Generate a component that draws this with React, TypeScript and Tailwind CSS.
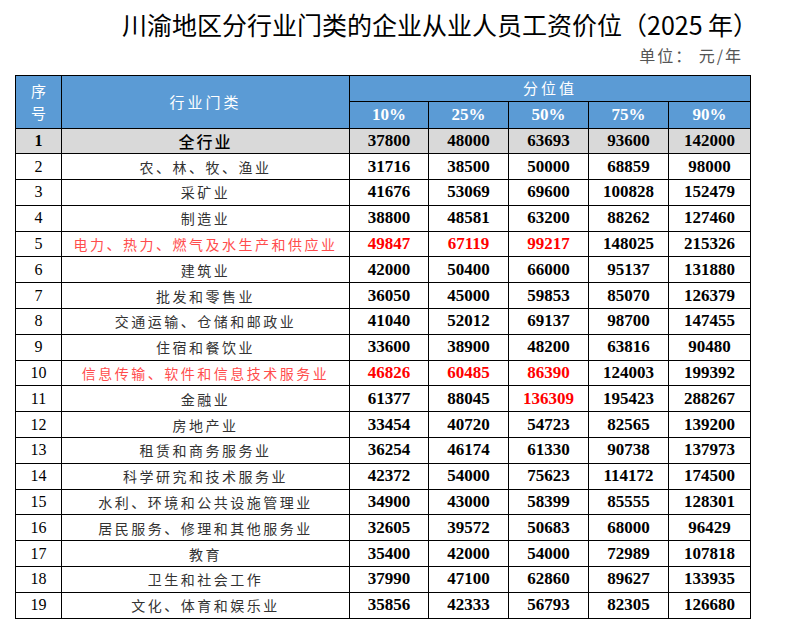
type Row = {
  no: number
  name: string
  values: number[]
  red?: number[]
  redName?: boolean
  total?: boolean
}

const rows: Row[] = [
  { no: 1, name: '全行业', values: [37800, 48000, 63693, 93600, 142000], total: true },
  { no: 2, name: '农、林、牧、渔业', values: [31716, 38500, 50000, 68859, 98000] },
  { no: 3, name: '采矿业', values: [41676, 53069, 69600, 100828, 152479] },
  { no: 4, name: '制造业', values: [38800, 48581, 63200, 88262, 127460] },
  { no: 5, name: '电力、热力、燃气及水生产和供应业', values: [49847, 67119, 99217, 148025, 215326], red: [0, 1, 2], redName: true },
  { no: 6, name: '建筑业', values: [42000, 50400, 66000, 95137, 131880] },
  { no: 7, name: '批发和零售业', values: [36050, 45000, 59853, 85070, 126379] },
  { no: 8, name: '交通运输、仓储和邮政业', values: [41040, 52012, 69137, 98700, 147455] },
  { no: 9, name: '住宿和餐饮业', values: [33600, 38900, 48200, 63816, 90480] },
  { no: 10, name: '信息传输、软件和信息技术服务业', values: [46826, 60485, 86390, 124003, 199392], red: [0, 1, 2], redName: true },
  { no: 11, name: '金融业', values: [61377, 88045, 136309, 195423, 288267], red: [2] },
  { no: 12, name: '房地产业', values: [33454, 40720, 54723, 82565, 139200] },
  { no: 13, name: '租赁和商务服务业', values: [36254, 46174, 61330, 90738, 137973] },
  { no: 14, name: '科学研究和技术服务业', values: [42372, 54000, 75623, 114172, 174500] },
  { no: 15, name: '水利、环境和公共设施管理业', values: [34900, 43000, 58399, 85555, 128301] },
  { no: 16, name: '居民服务、修理和其他服务业', values: [32605, 39572, 50683, 68000, 96429] },
  { no: 17, name: '教育', values: [35400, 42000, 54000, 72989, 107818] },
  { no: 18, name: '卫生和社会工作', values: [37990, 47100, 62860, 89627, 133935] },
  { no: 19, name: '文化、体育和娱乐业', values: [35856, 42333, 56793, 82305, 126680] },
]

const percents = ['10%', '25%', '50%', '75%', '90%']

export default function App() {
  return (
    <div className="w-[798px] h-[640px] bg-white overflow-hidden font-['Liberation_Serif','Noto_Sans_CJK_SC',serif]">
      <div className="pt-[8px] pl-[122px] h-[44px] text-[25px] leading-[32px] text-black font-['Noto_Sans_CJK_SC',sans-serif]">
        川渝地区分行业门类的企业从业人员工资价位（2025 年）
      </div>
      <div className="h-[31px] pr-[55px] text-right text-[16px] leading-[22px] tracking-[2px] text-[#555] font-['Noto_Sans_CJK_SC',sans-serif]">
        单位：&nbsp;元/年
      </div>

      <table className="ml-[15px] w-[736px] table-fixed border-collapse">
        <colgroup>
          <col className="w-[46px]" />
          <col className="w-[288px]" />
          <col className="w-[79px]" />
          <col className="w-[80px]" />
          <col className="w-[80px]" />
          <col className="w-[80px]" />
          <col className="w-[82px]" />
        </colgroup>
        <thead>
          <tr className="h-[26px] bg-[#5b9bd5] text-white">
            <th
              rowSpan={2}
              className="border border-black text-[15px] leading-[22px] font-normal font-['Noto_Sans_CJK_SC',serif]"
            >
              序<br />号
            </th>
            <th
              rowSpan={2}
              className="border border-black text-[15px] tracking-[3px] font-normal font-['Noto_Sans_CJK_SC',serif]"
            >
              行业门类
            </th>
            <th
              colSpan={5}
              className="border border-black text-[15px] tracking-[3px] font-normal font-['Noto_Sans_CJK_SC',serif]"
            >
              分位值
            </th>
          </tr>
          <tr className="h-[26px] bg-[#5b9bd5] text-white">
            {percents.map((p) => (
              <th key={p} className="border border-black text-[17px] font-bold">
                {p}
              </th>
            ))}
          </tr>
        </thead>
        <tbody>
          {rows.map((r) => (
            <tr key={r.no} className={`h-[25.8px] ${r.total ? 'bg-[#d9d9d9]' : 'bg-white'}`}>
              <td className={`border border-black p-0 text-center text-[16px] leading-[20px] text-black ${r.total ? 'font-bold' : ''}`}>
                {r.no}
              </td>
              <td
                className={`border border-black p-0 text-center leading-[20px] font-['Noto_Sans_CJK_SC',sans-serif] ${
                  r.total
                    ? 'text-[16px] tracking-[2px] text-black font-medium'
                    : r.redName
                      ? 'text-[14px] tracking-[2.5px] text-[#ff4d4d]'
                      : 'text-[14px] tracking-[2.5px] text-[#333]'
                }`}
              >
                {r.name}
              </td>
              {r.values.map((v, i) => (
                <td
                  key={i}
                  className={`border border-black p-0 text-center text-[17px] leading-[20px] font-bold ${
                    r.red && r.red.includes(i) ? 'text-[#ff0000]' : 'text-black'
                  }`}
                >
                  {v}
                </td>
              ))}
            </tr>
          ))}
        </tbody>
      </table>
    </div>
  )
}
